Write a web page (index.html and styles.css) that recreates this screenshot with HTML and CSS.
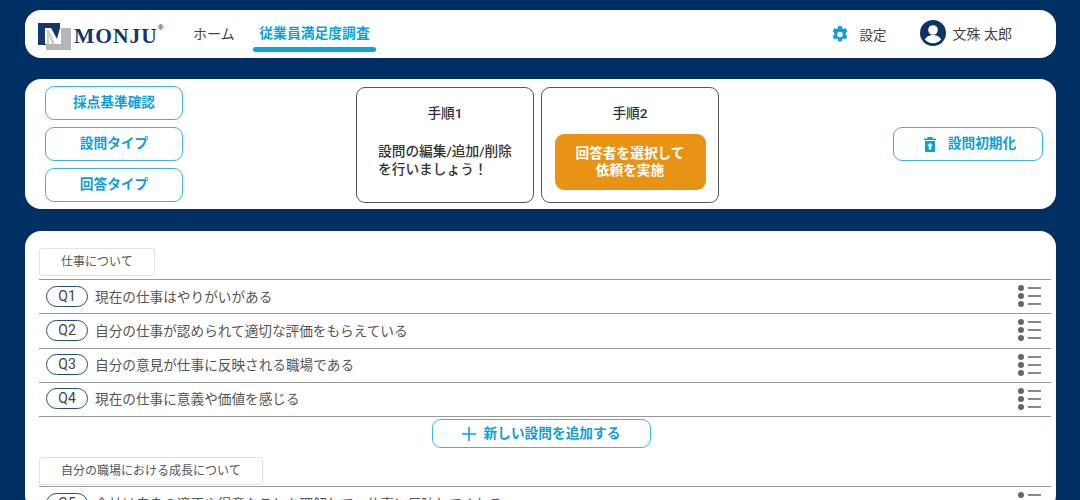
FILE: index.html
```html
<!DOCTYPE html>
<html lang="ja">
<head>
<meta charset="utf-8">
<title>MONJU</title>
<link rel="stylesheet" href="styles.css">
</head>
<body>
<header class="panel topbar">
  <div class="logo">
    <svg class="logo-mark" width="33" height="27" viewBox="0 0 33 27">
      <rect x="0" y="0" width="22" height="22" fill="#0f3a6b"/>
      <path d="M23 5h10v22H8v-6h15z" fill="#b4b6b9"/>
      <path d="M7 5h6l6 11 3-11h1v16H7z" fill="#fff"/>
      <path d="M9 7l2 0 6 14h-3l-3-8v8H9z" fill="#c9cbcd"/>
    </svg>
    <span class="logo-text">MONJU</span><sup class="logo-reg">®</sup>
  </div>
  <nav class="nav">
    <a class="nav-item">ホーム</a>
    <a class="nav-item nav-active">従業員満足度調査</a>
  </nav>
  <div class="top-right">
    <svg class="gear" width="16" height="18" viewBox="0 0 16 18"><path fill="#0f9fd8" fill-rule="evenodd" d="M6.300 0h3.400l.5 2.300 1.300.7 2.200-.7 1.700 3-1.700 1.600v1.800l1.700 1.600-1.700 3-2.200-.7-1.300.7-.5 2.300H6.300l-.5-2.300-1.300-.7-2.200.7-1.700-3 1.700-1.600V6.900L.6 5.300l1.700-3 2.200.7 1.300-.7zM8 5.700a2.800 2.800 0 1 0 0 5.600 2.800 2.800 0 0 0 0-5.600z"/></svg>
    <span class="top-link">設定</span>
    <svg class="avatar" width="26" height="26" viewBox="0 0 26 26"><circle cx="13" cy="13" r="13" fill="#0b3566"/><circle cx="13" cy="10" r="4.800" fill="#fff"/><path d="M4.800 19.500c2-3.500 5-4.500 8.200-4.500s6.200 1 8.200 4.500c-2 2.300-5 3.700-8.200 3.700s-6.200-1.400-8.200-3.700z" fill="#fff"/></svg>
    <span class="top-user">文殊 太郎</span>
  </div>
</header>

<section class="panel steps">
  <div class="side-buttons">
    <a class="btn">採点基準確認</a>
    <a class="btn">設問タイプ</a>
    <a class="btn">回答タイプ</a>
  </div>
  <div class="step-cards">
    <div class="step-card">
      <div class="step-title">手順1</div>
      <p class="step-text">設問の編集/追加/削除<br>を行いましょう！</p>
    </div>
    <div class="step-card">
      <div class="step-title">手順2</div>
      <a class="step-action">回答者を選択して<br>依頼を実施</a>
    </div>
  </div>
  <a class="btn btn-reset">
    <svg class="btn-icon" width="12" height="15" viewBox="0 0 12 15"><path fill="#0f9fd8" d="M0 1.500h3.500V0h5v1.500H12V3H0zM1 4h10v11H1z"/><path fill="#fff" d="M6 6l3 3H7.200v3.500H4.800V9H3z"/></svg>
    <span>設問初期化</span>
  </a>
</section>

<main class="panel questions">
  <div class="group-label">仕事について</div>
  <ul class="q-list">
    <li class="q-row"><span class="q-badge">Q1</span><span class="q-text">現在の仕事はやりがいがある</span><span class="q-menu"><i></i><i></i><i></i></span></li>
    <li class="q-row"><span class="q-badge">Q2</span><span class="q-text">自分の仕事が認められて適切な評価をもらえている</span><span class="q-menu"><i></i><i></i><i></i></span></li>
    <li class="q-row"><span class="q-badge">Q3</span><span class="q-text">自分の意見が仕事に反映される職場である</span><span class="q-menu"><i></i><i></i><i></i></span></li>
    <li class="q-row"><span class="q-badge">Q4</span><span class="q-text">現在の仕事に意義や価値を感じる</span><span class="q-menu"><i></i><i></i><i></i></span></li>
  </ul>
  <div class="add-wrap">
    <a class="btn btn-add">
      <svg class="btn-icon" width="14" height="14" viewBox="0 0 14 14"><path stroke="#0f9fd8" stroke-width="1.600" d="M7 0v14M0 7h14"/></svg>
      <span>新しい設問を追加する</span>
    </a>
  </div>
  <div class="group-label">自分の職場における成長について</div>
  <ul class="q-list q-list-tight">
    <li class="q-row"><span class="q-badge">Q5</span><span class="q-text">会社は自身の適正や得意なことを理解して、仕事に反映してくれる</span><span class="q-menu"><i></i><i></i><i></i></span></li>
  </ul>
</main>
</body>
</html>
```

FILE: styles.css
```css
* { box-sizing: border-box; }
html, body { margin: 0; height: 500px; overflow: hidden; }
body {
  background: #002f63;
  padding: 10px 24px 0 25px;
  font-family: Roboto, "Noto Sans CJK JP", sans-serif;
  color: #444;
}
ul { list-style: none; margin: 0; padding: 0; }
p { margin: 0; }
.panel { background: #fff; border-radius: 16px; }

.topbar { height: 48px; display: flex; align-items: center; padding-left: 13px; }
.logo { display: flex; align-items: center; width: 155px; height: 100%; }
.logo-mark { flex: none; margin-top: 4px; }
.logo-text { font-family: "Liberation Serif", serif; font-weight: 700; font-size: 21.500px; letter-spacing: 1px; color: #12386a; margin-left: 3px; margin-top: 5px; }
.logo-reg { font-family: "Liberation Sans", sans-serif; font-size: 8px; font-weight: 700; color: #12386a; align-self: flex-start; margin: 14px 0 0 0; line-height: 1; }
.nav { display: flex; height: 100%; }
.nav-item { font-size: 14px; color: #444; line-height: 49px; width: 60px; position: relative; text-align: left; }
.nav-active { width: 123px; color: #0f9fd8; font-weight: 700; font-size: 13.800px; text-align: center; line-height: 47px; }
.nav-active::after { content: ""; position: absolute; left: 0; right: 0; bottom: 6px; height: 5px; border-radius: 3px; background: #0fa3dc; }
.top-right { margin-left: auto; display: flex; align-items: center; padding-right: 44px; }
.gear { margin-top: 1px; }
.top-link { font-size: 13.500px; margin: -1px 0 0 12px; }
.avatar { margin-left: 33px; margin-top: -2px; }
.top-user { font-size: 14px; margin-left: 7px; margin-top: -2px; }

.steps { height: 130px; margin-top: 21px; display: flex; align-items: center; padding: 0 13px 0 20px; }
.btn { display: flex; align-items: center; justify-content: center; border: 1px solid #38b6e6; border-radius: 9px; color: #0f9fd8; font-weight: 700; font-size: 13.700px; background: #fff; padding-bottom: 4px; }
.btn-icon { flex: none; margin-top: 4px; }
.side-buttons { display: flex; flex-direction: column; gap: 7px; width: 138px; }
.side-buttons .btn { height: 34px; }
.step-cards { display: flex; gap: 7px; margin: 1px 0 0 173px; }
.step-card { width: 178px; height: 116px; border: 1px solid #555; border-radius: 9px; display: flex; flex-direction: column; align-items: center; }
.step-title { font-size: 13.700px; font-weight: 500; color: #333; margin-top: 16px; line-height: 19px; }
.step-text { width: 100%; padding-left: 21px; margin-top: 19px; font-size: 13.700px; font-weight: 500; line-height: 18px; color: #333; }
.step-action { width: 151px; height: 56px; margin-top: 11px; background: #e99316; color: #fff; border-radius: 9px; font-weight: 700; font-size: 13.700px; line-height: 17px; display: flex; align-items: center; justify-content: center; text-align: center; }
.btn-reset { width: 150px; height: 34px; margin-left: auto; gap: 12px; padding-left: 4px; }

.questions { margin-top: 22px; height: 280px; padding: 17px 5px 0 14px; }
.group-label { display: inline-block; vertical-align: top; height: 28px; line-height: 27px; padding: 0 21px; border: 1px solid #e2e2e2; border-radius: 3px; font-size: 12px; color: #555; }
.q-list { border-top: 1px solid #999; margin-top: 3px; }
.q-list-tight { margin-top: 1px; }
.q-row { display: flex; align-items: center; height: 34.250px; border-bottom: 1px solid #999; padding-left: 7px; }
.q-badge { width: 42px; height: 21px; margin-top: -1px; border: 1px solid #1f4f80; border-radius: 10.500px; font-size: 14px; line-height: 19px; text-align: center; color: #444; }
.q-text { font-size: 13.650px; margin: -2px 0 0 7px; color: #555; }
.q-menu { margin: -1px 10px 0 auto; width: 23px; display: flex; flex-direction: column; gap: 2px; }
.q-menu i { display: block; height: 6px; position: relative; }
.q-menu i::before { content: ""; position: absolute; left: 0; top: 0; width: 6px; height: 6px; border-radius: 50%; background: #666; }
.q-menu i::after { content: ""; position: absolute; left: 10px; right: 0; top: 2px; height: 2px; background: #888; }
.add-wrap { display: flex; justify-content: center; padding: 2px 0 9px; }
.btn-add { width: 219px; height: 29px; gap: 8px; margin-left: -8px; }
```
